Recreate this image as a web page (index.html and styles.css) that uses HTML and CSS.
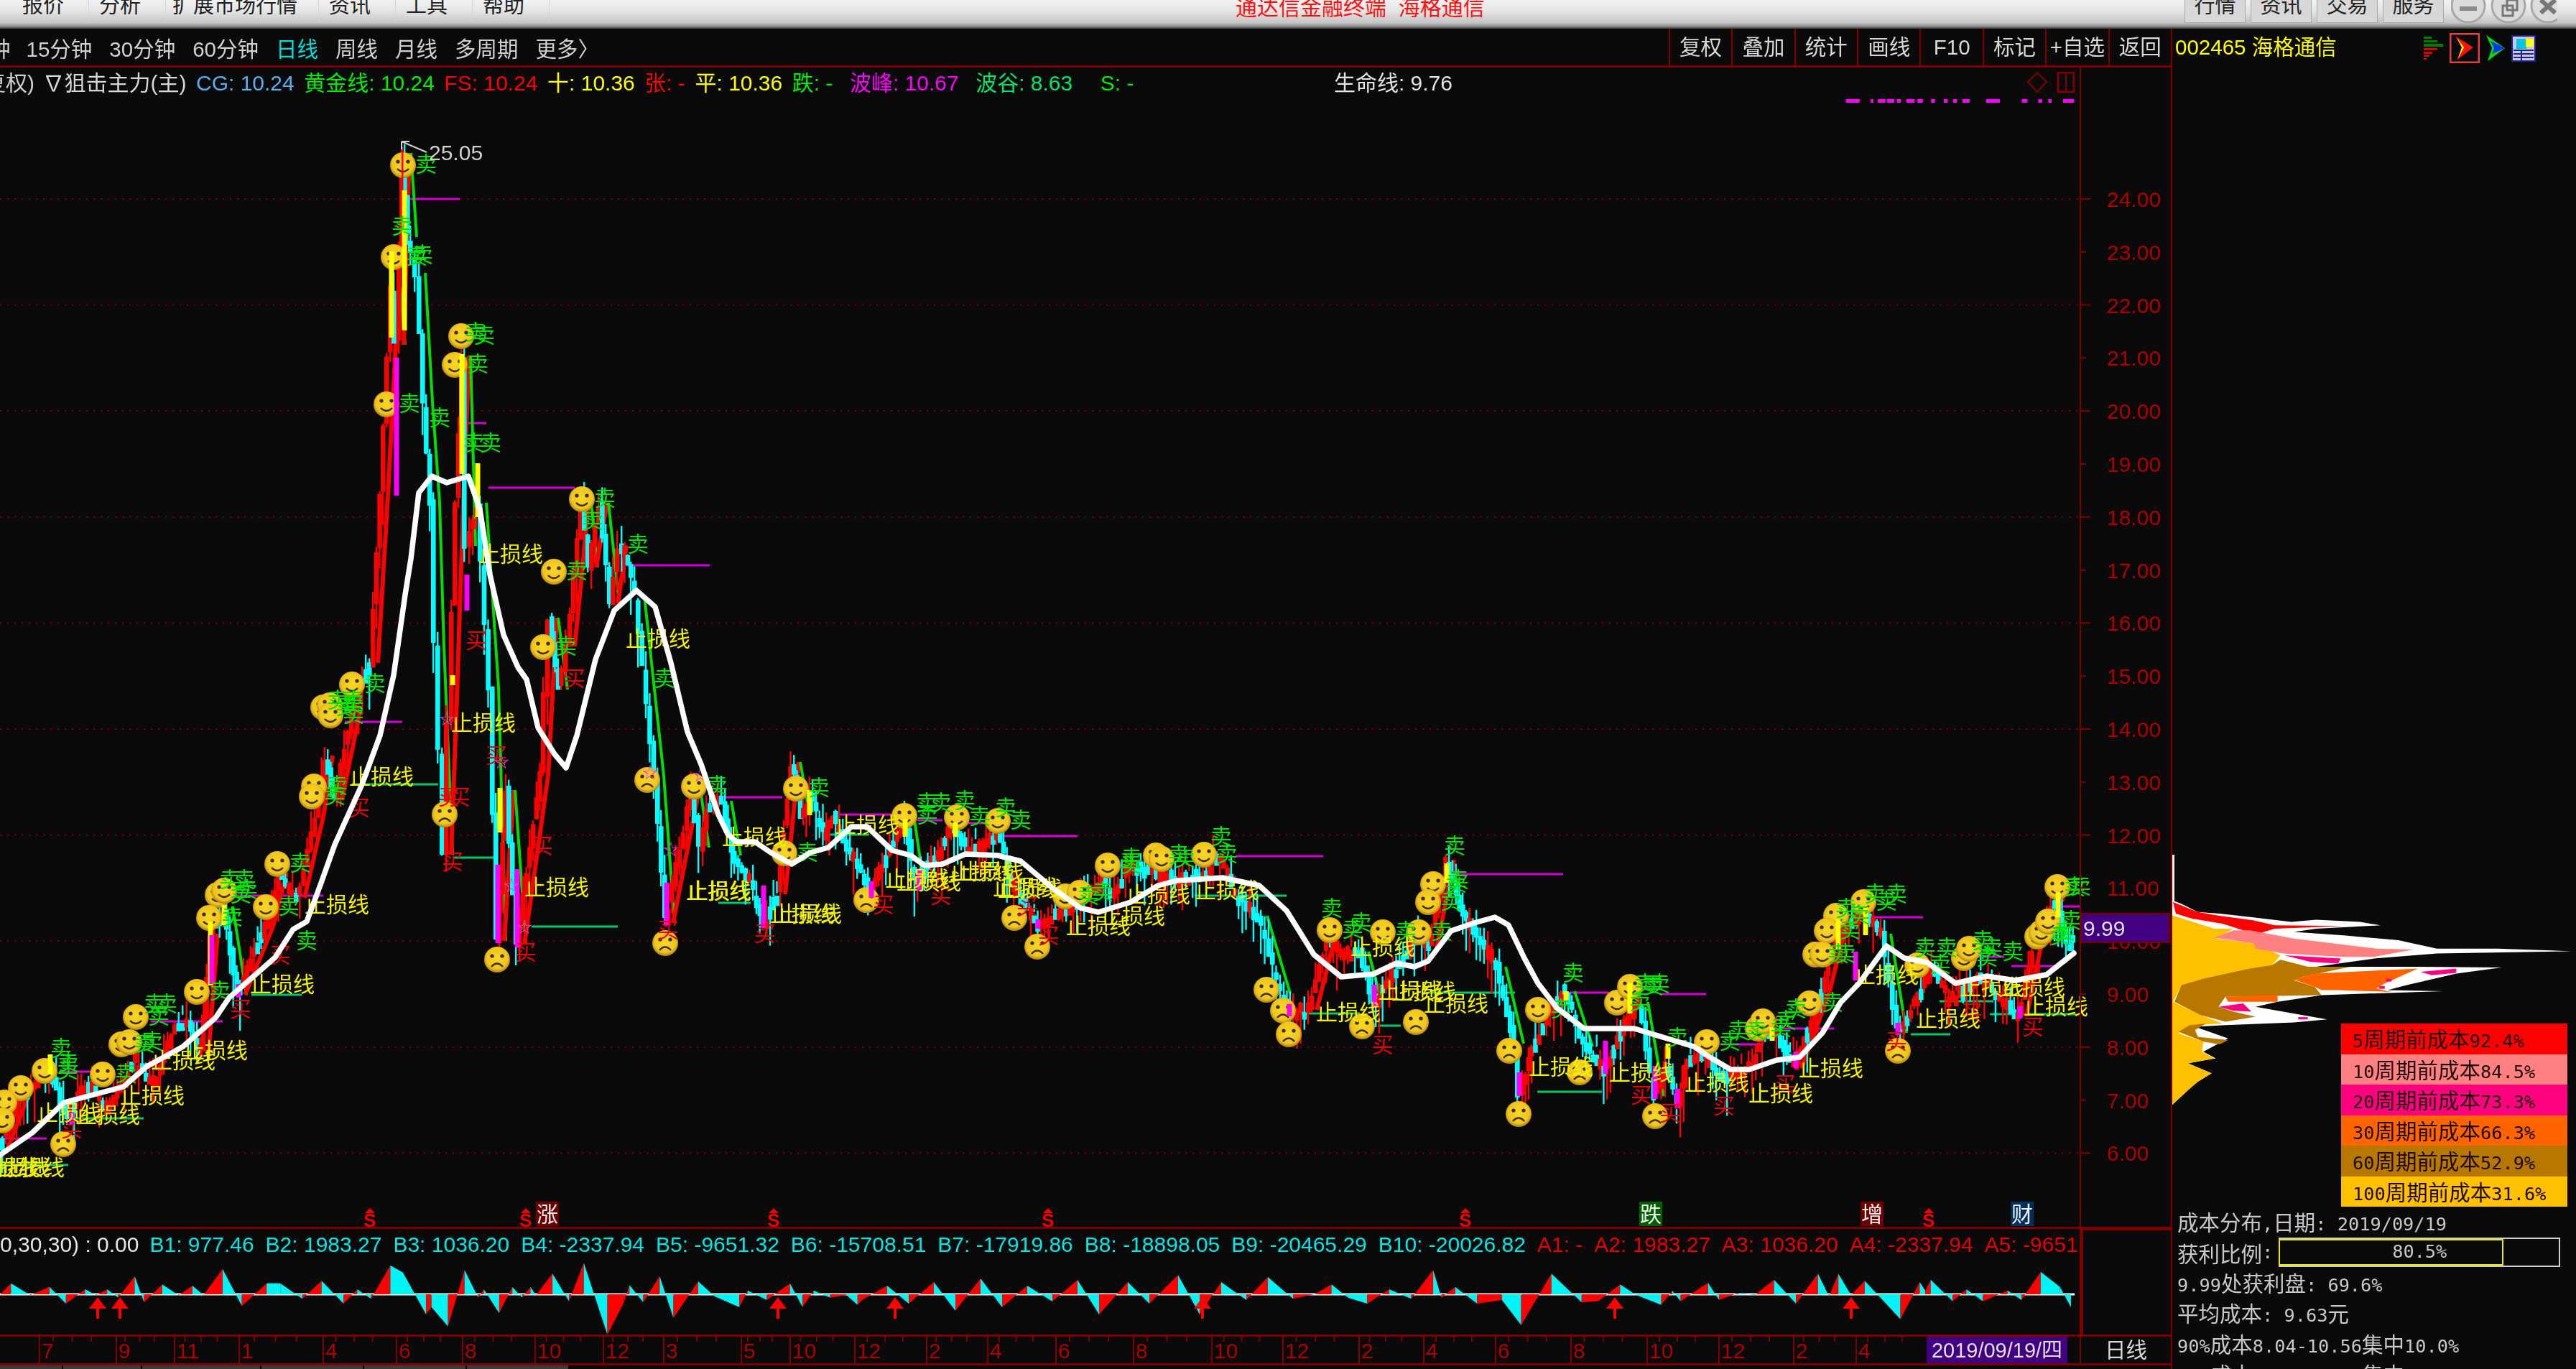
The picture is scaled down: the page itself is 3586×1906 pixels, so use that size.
FILE: index.html
```html
<!DOCTYPE html>
<html lang="zh-CN">
<head>
<meta charset="utf-8">
<title>海格通信 K线</title>
<link rel="stylesheet" href="styles.css">
</head>
<body>
<div class="app">
  <header class="titlebar">
    <nav class="menu">
      <span class="menu-item">报价</span><span class="menu-item">分析</span><span class="menu-item wide">扩展市场行情</span><span class="menu-item">资讯</span><span class="menu-item">工具</span><span class="menu-item">帮助</span>
    </nav>
    <div class="caption">通达信金融终端  海格通信</div>
    <div class="sysbtns">
      <span class="sysbtn">行情</span><span class="sysbtn">资讯</span><span class="sysbtn">交易</span><span class="sysbtn">服务</span>
      <svg class="winctl" width="148" height="40" viewBox="0 0 148 40">
        <g fill="#dcdcdc" stroke="#a8a8a8" stroke-width="3"><circle cx="24" cy="8" r="23"/><circle cx="80" cy="8" r="23"/><circle cx="135" cy="8" r="23"/></g>
        <rect x="12" y="9" width="24" height="6" fill="#8a8a8a"/>
        <g fill="none" stroke="#777" stroke-width="3"><rect x="72" y="8" width="14" height="14"/><rect x="78" y="0" width="14" height="14"/></g>
        <path d="M125 0L145 18M145 0L125 18" stroke="#777" stroke-width="6" fill="none"/>
      </svg>
    </div>
  </header>
  <div class="workspace">
    <section class="left">
      <div class="tabs">
        <span class="tab first">钟</span><span class="tab">15分钟</span><span class="tab">30分钟</span><span class="tab">60分钟</span><span class="tab active">日线</span><span class="tab">周线</span><span class="tab">月线</span><span class="tab">多周期</span><span class="tab">更多〉</span>
        <div class="tools"><span class="tool">复权</span><span class="tool">叠加</span><span class="tool">统计</span><span class="tool">画线</span><span class="tool">F10</span><span class="tool">标记</span><span class="tool">+自选</span><span class="tool">返回</span></div>
      </div>
      <div class="pricehead">
        <span class="hd first-hd">复权)</span>
        <span class="hd name">∇狙击主力(主)</span>
        <span class="hd c-cg">CG: 10.24</span>
        <span class="hd c-gold">黄金线: 10.24</span>
        <span class="hd c-red">FS: 10.24</span>
        <span class="hd c-yellow">十: 10.36</span>
        <span class="hd c-red">张: -</span>
        <span class="hd c-yellow gap-m">平: 10.36</span>
        <span class="hd c-gold">跌: -</span>
        <span class="hd c-magenta gap-s">波峰: 10.67</span>
        <span class="hd c-teal gap-s">波谷: 8.63</span>
        <span class="hd c-gold gap-l">S: -</span>
        <span class="hd c-white gap-xl">生命线: 9.76</span>
        <svg class="marks" width="66" height="32" viewBox="0 0 66 32"><path d="M14 1L27 14L14 28L1 14Z" fill="none" stroke="#800000" stroke-width="2"/><rect x="43" y="1" width="22" height="27" fill="none" stroke="#800000" stroke-width="3"/><path d="M54 1V28" stroke="#800000" stroke-width="2"/></svg>
      </div>
      <svg id="price" class="price" viewBox="0 137 3022 1571" width="3022" height="1571"></svg>
      <div class="subrow">
        <div class="subpane">
          <div class="subhead">
            <span class="hd c-white first-sub">0,30,30) : 0.00</span>
            <span class="hd c-cyan">B1: 977.46</span><span class="hd c-cyan">B2: 1983.27</span><span class="hd c-cyan">B3: 1036.20</span><span class="hd c-cyan">B4: -2337.94</span><span class="hd c-cyan">B5: -9651.32</span><span class="hd c-cyan">B6: -15708.51</span><span class="hd c-cyan">B7: -17919.86</span><span class="hd c-cyan">B8: -18898.05</span><span class="hd c-cyan">B9: -20465.29</span><span class="hd c-cyan">B10: -20026.82</span>
            <span class="hd c-dimred">A1: -</span><span class="hd c-dimred">A2: 1983.27</span><span class="hd c-dimred">A3: 1036.20</span><span class="hd c-dimred">A4: -2337.94</span><span class="hd c-dimred">A5: -9651.32</span>
          </div>
          <svg id="sub" class="sub" viewBox="0 1754 2895 104" width="2895" height="104"></svg>
        </div>
        <div class="subgutter"></div>
      </div>
      <div class="timerow">
        <svg id="axis" class="axis" viewBox="0 1861 2895 37" width="2895" height="37"></svg>
        <div class="cycle">日线</div>
      </div>
      <div class="statusbar"><span></span><span></span><span></span><span></span><span></span><span></span></div>
    </section>
    <aside class="side">
      <div class="side-head">
        <span class="code">002465 海格通信</span>
        <div class="side-icons">
          <svg width="28" height="34" viewBox="0 0 28 34"><g fill="#008000"><rect width="11" height="3" y="1"/><rect width="19" height="3" y="6"/><rect width="27" height="4" y="11"/></g><g fill="#e00000"><rect width="19" height="3" y="17"/><rect width="12" height="3" y="22"/><rect width="8" height="2" y="27"/><rect width="4" height="2" y="31"/></g></svg>
          <svg class="ic-sel" width="42" height="42" viewBox="0 0 42 42"><rect x="1" y="1" width="40" height="40" fill="#0a0a0a" stroke="#e04040" stroke-width="3"/><path d="M9 5L33 20L11 37L17 20Z" fill="#ff1000"/><path d="M9 5L20 20L11 37L17 20Z" fill="#ffff00"/></svg>
          <svg width="28" height="36" viewBox="0 0 28 36"><path d="M1 0L27 18L3 36L9 18Z" fill="#00e000"/><path d="M7 8L27 18L9 26L12 18Z" fill="#0030ff"/></svg>
          <svg width="34" height="37" viewBox="0 0 34 37"><rect x="1" y="1" width="32" height="35" fill="#c8c8e0" stroke="#202090" stroke-width="2"/><rect x="7" y="5" width="14" height="14" fill="#00c8e0"/><rect x="20" y="5" width="11" height="11" fill="#ffff00"/><path d="M3 21H31M3 26H31M3 31H31M14 21V36" stroke="#202090" stroke-width="2"/></svg>
        </div>
      </div>
      <div class="chips">
        <svg id="chips" class="chips-art" viewBox="0 0 560 360" width="560" height="360"></svg>
        <ul class="legend">
          <li class="l1"><span class="m">5</span>周期前成本<span class="m">92.4%</span></li>
          <li class="l2"><span class="m">10</span>周期前成本<span class="m">84.5%</span></li>
          <li class="l3"><span class="m">20</span>周期前成本<span class="m">73.3%</span></li>
          <li class="l4"><span class="m">30</span>周期前成本<span class="m">66.3%</span></li>
          <li class="l5"><span class="m">60</span>周期前成本<span class="m">52.9%</span></li>
          <li class="l6"><span class="m">100</span>周期前成本<span class="m">31.6%</span></li>
        </ul>
      </div>
      <div class="stats">
        <div class="stat">成本分布<span class="m">,</span>日期<span class="m">: 2019/09/19</span></div>
        <div class="stat profit">获利比例<span class="m">:</span>
          <div class="pbar"><div class="pfill" style="width:80.5%"></div><span class="m ptext">80.5%</span></div>
        </div>
        <div class="stat"><span class="m">9.99</span>处获利盘<span class="m">: 69.6%</span></div>
        <div class="stat">平均成本<span class="m">: 9.63</span>元</div>
        <div class="stat"><span class="m">90%</span>成本<span class="m">8.04-10.56</span>集中<span class="m">10.0%</span></div>
        <div class="stat"><span class="m">70%</span>成本<span class="m">8.76-10.30</span>集中<span class="m">6.1%</span></div>
      </div>
    </aside>
  </div>
</div>
<script src="chart.js"></script>
</body>
</html>
```
FILE: styles.css
```css
* { box-sizing: border-box; }
html, body { margin: 0; padding: 0; background: #0a0a0a; }
body { width: 3586px; height: 1906px; overflow: hidden; font-family: "Liberation Sans", "Noto Sans CJK SC", sans-serif; font-size: 30px; color: #cfcfcf; }
.app { width: 3586px; height: 1906px; overflow: hidden; filter: blur(0.55px); }

.titlebar { height: 40px; display: grid; grid-template-columns: 1720px 1fr auto; overflow: hidden; background: linear-gradient(#f2f2f2 0, #e4e4e4 40%, #c4c4c4 80%, #8a8a8a 92%, #3a3a3a 100%); }
.menu { display: flex; padding-left: 17px; }
.menu-item { width: 107px; text-align: left; padding-left: 14px; line-height: 16px; height: 32px; color: #222; font-size: 29px; border-right: 1px solid #d4d4d4; }
.menu-item.wide { width: 213px; padding-left: 9px; }
.caption { color: #ff1010; font-size: 30px; line-height: 21px; white-space: pre; }
.sysbtns { display: flex; gap: 7px; align-items: flex-start; padding-right: 26px; }
.sysbtn { width: 85px; height: 32px; line-height: 16px; text-align: center; font-size: 29px; color: #222; background: #d8d8d8; border: 1px solid #a8a8a8; border-top: 0; }
.winctl { margin-left: 3px; display: block; }

.workspace { display: flex; height: 1866px; }
.left { width: 3024px; border-right: 2px solid #800000; display: flex; flex-direction: column; }
.tabs { height: 54px; display: flex; align-items: center; border-bottom: 3px solid #800000; overflow: hidden; font-size: 29.5px; padding-left: 0; gap: 24px; }
.tab { color: #d0d0d0; white-space: nowrap; }
.tab.first { margin-left: -15px; margin-right: -2px; }
.tab.active { color: #00dede; }
.tools { margin-left: auto; display: flex; align-self: stretch; }
.tool { width: 87.4px; border-left: 2px solid #800000; text-align: center; line-height: 51px; color: #d8d8d8; white-space: nowrap; }

.pricehead { width: 2897px; height: 43px; display: flex; align-items: center; gap: 13.5px; border-right: 2px solid #800000; overflow: hidden; white-space: nowrap; }
.hd { flex: none; line-height: 43px; }
.first-hd { margin-left: -22px; margin-right: -2px; }
.name { color: #d8d8d8; }
.c-cg { color: #55b0f0; }
.c-gold { color: #00f000; }
.c-red { color: #ff0000; }
.c-dimred { color: #e80000; }
.c-yellow { color: #ffff00; }
.c-magenta { color: #ff00ff; }
.c-teal { color: #00e868; }
.c-white { color: #e4e4e4; }
.c-cyan { color: #00e8e8; }
.gap-s { margin-left: 10px; }
.gap-m { margin-left: 0; }
.gap-l { margin-left: 25px; }
.gap-xl { margin-left: 265px; }
.marks { margin-left: auto; margin-right: 7px; flex: none; }

.price { display: block; flex: none; }
.grid-line { stroke: #800000; stroke-width: 2; stroke-dasharray: 2.5 7.5; }
.axis-line { stroke: #800000; stroke-width: 2; }
.ylabel { fill: #b00000; font-size: 30px; }
.cur-box { fill: #400080; stroke: #800000; stroke-width: 2; }
.cur-text { fill: #e0e0e0; font-size: 30px; }
.peak { fill: #cfcfcf; font-size: 30px; }
.sell { fill: #00e800; font-size: 30px; font-family: "Noto Sans CJK SC", sans-serif; }
.buy { fill: #f00000; font-size: 30px; font-family: "Noto Sans CJK SC", sans-serif; }
.stop { fill: #f4f400; font-size: 30px; font-family: "Noto Sans CJK SC", sans-serif; }
.star { fill: #e040e0; font-size: 22px; }
.sig { font-size: 30px; font-family: "Noto Sans CJK SC", sans-serif; fill: #f0f0f0; }
.s-mark { fill: #f00000; font-size: 26px; font-weight: bold; }

.subrow { display: flex; height: 150px; flex: none; border-top: 3px solid #800000; }
.subpane { width: 2895px; overflow: hidden; }
.subhead { height: 43px; display: flex; align-items: center; gap: 16px; overflow: hidden; white-space: nowrap; }
.first-sub { margin-right: -1px; }
.sub { display: block; }
.subgutter { flex: 1; border-left: 5px solid #800000; border-top: 2px solid #800000; }

.timerow { height: 43px; flex: none; display: flex; border-top: 3px solid #800000; border-bottom: 3px solid #800000; }
.axis { display: block; flex: none; }
.tick { stroke: #800000; stroke-width: 2; }
.tlabel { fill: #b00000; font-size: 30px; }
.datetext { fill: #e0e0e0; font-size: 29px; font-family: "Liberation Sans", "Noto Sans CJK SC", sans-serif; }
.cycle { flex: 1; border-left: 2px solid #800000; text-align: center; line-height: 37px; color: #d8d8d8; font-size: 29.5px; }

.statusbar { height: 5px; flex: none; display: flex; }
.statusbar span { height: 5px; background: #3c3c3c; border-right: 2px solid #0a0a0a; width: 110px; }
.statusbar span:nth-child(1) { width: 88px; }
.statusbar span:nth-child(3) { width: 166px; }
.statusbar span:nth-child(4), .statusbar span:nth-child(5), .statusbar span:nth-child(6) { width: 143px; }

.side { flex: 1; display: flex; flex-direction: column; min-width: 0; overflow: hidden; }
.side-head { height: 54px; flex: none; display: flex; align-items: center; padding-left: 4px; }
.code { color: #ffff00; font-size: 29.5px; white-space: nowrap; position: relative; top: -4px; }
.side-icons { margin-left: auto; margin-right: 56px; display: flex; align-items: center; gap: 8px; }

.chips { position: relative; flex: none; height: 1586px; display: flex; flex-direction: column; justify-content: flex-end; align-items: flex-end; padding-right: 12px; }
.chips-art { position: absolute; left: 0; top: 1096px; }
.legend { position: relative; list-style: none; margin: 0; padding: 0; width: 315px; }
.legend li { height: 42.5px; line-height: 40px; padding-left: 16px; font-size: 29.5px; color: #1a0808; white-space: nowrap; font-family: "Noto Sans CJK SC", sans-serif; }
.l1 { background: #ff0000; }
.l2 { background: #ff8080; }
.l3 { background: #ff0080; }
.l4 { background: #ff6400; }
.l5 { background: #b87800; }
.l6 { background: #ffc000; }
.m { font-family: "DejaVu Sans Mono", monospace; font-size: 25.3px; }

.stats { padding-left: 7px; flex: none; }
.stat { height: 42.4px; line-height: 40px; font-size: 29.5px; color: #c8c8c8; white-space: nowrap; font-family: "Noto Sans CJK SC", sans-serif; }
.profit { display: flex; align-items: center; }
.pbar { position: relative; margin-left: 8px; width: 392px; height: 41px; border: 2px solid #d0d0d0; }
.pfill { height: 37px; border: 2px solid #e8e800; margin: 0 0 0 -2px; }
.ptext { position: absolute; left: 0; right: 0; top: -2px; text-align: center; line-height: 40px; color: #c8c8c8; }
```
FILE: chart.js
```js
(function () {
  var seed = 20190919;
  function rnd() { seed = (seed * 1664525 + 1013904223) >>> 0; return seed / 4294967296; }
  function Y(p) { return 277 + (24 - p) * 73.8; }

  var pivots = [[0,1600],[30,1525],[70,1490],[90,1550],[125,1510],[150,1545],[175,1500],[185,1475],[215,1510],[240,1440],[262,1425],[280,1470],[293,1300],[312,1262],[331,1385],[370,1290],[389,1215],[414,1250],[440,1137],[453,1052],[466,1114],[491,991],[516,923],[530,690],[545,400],[552,480],[560,213],[568,330],[580,380],[590,560],[600,700],[606,900],[618,1190],[625,1000],[635,700],[643,495],[650,760],[665,700],[682,957],[692,1310],[705,1100],[720,1315],[753,1080],[765,860],[778,960],[790,900],[800,800],[810,690],[820,790],[835,700],[850,840],[862,760],[875,785],[885,830],[912,1080],[927,1285],[963,1100],[975,1180],[985,1120],[1006,1115],[1019,1191],[1045,1230],[1064,1290],[1083,1245],[1102,1061],[1115,1134],[1128,1103],[1147,1161],[1160,1134],[1185,1191],[1210,1237],[1230,1203],[1261,1142],[1274,1230],[1312,1180],[1325,1145],[1350,1190],[1389,1161],[1408,1230],[1446,1291],[1491,1264],[1536,1226],[1548,1245],[1574,1207],[1606,1214],[1638,1226],[1676,1218],[1695,1191],[1721,1249],[1752,1275],[1784,1383],[1797,1410],[1823,1406],[1848,1306],[1868,1330],[1893,1325],[1912,1398],[1945,1350],[1976,1298],[1990,1320],[2014,1197],[2033,1262],[2052,1296],[2084,1346],[2109,1453],[2116,1522],[2129,1472],[2160,1403],[2180,1380],[2205,1457],[2234,1491],[2262,1426],[2282,1395],[2304,1526],[2320,1480],[2336,1541],[2345,1484],[2371,1468],[2396,1499],[2441,1487],[2454,1434],[2475,1440],[2498,1487],[2537,1380],[2556,1304],[2594,1273],[2620,1300],[2642,1438],[2671,1388],[2690,1346],[2715,1395],[2754,1361],[2811,1415],[2830,1323],[2862,1250],[2878,1319],[2887,1304]];

  var life = [[0,1608],[45,1577],[89,1535],[172,1513],[204,1485],[255,1457],[300,1417],[319,1389],[383,1333],[408,1294],[427,1283],[446,1232],[466,1176],[504,1092],[529,1024],[548,940],[564,828],[572,778],[583,686],[601,663],[622,672],[652,663],[668,709],[682,800],[701,884],[721,929],[733,946],[749,1013],[772,1050],[788,1069],[803,1024],[829,918],[855,850],[886,822],[912,845],[934,923],[957,1019],[976,1064],[1000,1134],[1013,1161],[1025,1172],[1051,1172],[1073,1187],[1102,1203],[1128,1187],[1153,1180],[1185,1151],[1207,1151],[1242,1184],[1268,1191],[1287,1205],[1312,1203],[1344,1189],[1389,1191],[1421,1199],[1466,1237],[1504,1264],[1529,1270],[1574,1256],[1612,1233],[1638,1226],[1702,1222],[1753,1233],[1791,1268],[1829,1329],[1867,1360],[1912,1356],[1944,1341],[1969,1346],[1988,1338],[2020,1296],[2052,1285],[2081,1277],[2100,1288],[2122,1334],[2141,1369],[2167,1403],[2205,1432],[2275,1432],[2358,1457],[2377,1470],[2409,1489],[2435,1489],[2473,1476],[2505,1472],[2537,1438],[2562,1396],[2588,1369],[2626,1317],[2651,1334],[2683,1340],[2722,1369],[2766,1359],[2805,1365],[2849,1357],[2887,1327]];

  var smiles = [[490,953],[450,985],[459,982],[460,996],[437,1095],[434,1109],[386,1203],[370,1263],[303,1246],[312,1240],[291,1278],[274,1381],[189,1416],[169,1454],[180,1451],[143,1496],[62,1491],[29,1515],[6,1535],[3,1560],[756,901],[966,1095],[561,230],[548,358],[538,563],[642,468],[633,508],[810,695],[771,796],[1108,1098],[1092,1188],[1259,1136],[1332,1138],[1389,1143],[1483,1248],[1503,1243],[1542,1205],[1609,1191],[1617,1196],[1676,1190],[1851,1295],[1925,1298],[1975,1298],[1995,1231],[1988,1256],[2141,1406],[2251,1396],[2269,1374],[2376,1451],[2447,1432],[2454,1422],[2519,1397],[2556,1275],[2543,1296],[2527,1329],[2537,1329],[2594,1256],[2669,1344],[2734,1334],[2741,1321],[2836,1304],[2842,1298],[2851,1283],[2864,1235]];
  var sads = [[88,1593],[619,1134],[692,1336],[901,1086],[926,1313],[1206,1253],[1412,1278],[1444,1318],[1763,1378],[1786,1407],[1794,1440],[1896,1429],[1971,1423],[2101,1463],[2114,1551],[2199,1493],[2304,1554],[2642,1463]];
  var sellsExtra = [[560,315],[588,355],[612,582],[683,617],[660,617],[662,463],[320,1225],[340,1225],[215,1398],[232,1398],[85,1460],[95,1480],[492,975],[470,975],[427,1310],[825,725],[888,758],[925,945],[1290,1118],[1310,1118],[1343,1115],[1400,1125],[1575,1195],[1700,1165],[1854,1265],[1895,1285],[2025,1178],[2030,1225],[2190,1355],[2290,1370],[2310,1370],[2335,1445],[2420,1435],[2445,1435],[2500,1405],[2610,1245],[2640,1245],[2570,1265],[2680,1320],[2710,1320],[2760,1310],[2802,1325],[2888,1235]];
  var buysExtra = [[100,1572],[335,1405],[390,1330],[500,1125],[640,1110],[625,1110],[630,1200],[663,892],[691,1052],[732,1326],[755,1178],[800,945],[930,1295],[1065,1300],[1230,1260],[1310,1247],[1430,1262],[1460,1303],[1925,1455],[2285,1525],[2325,1550],[2400,1540],[2485,1510],[2640,1450],[2745,1410],[2830,1430]];
  var stops = [[531,1081],[673,1006],[469,1259],[393,1370],[775,1235],[711,771],[916,889],[1001,1240],[300,1462],[255,1476],[212,1525],[150,1552],[96,1549],[45,1625],[25,1625],[10,1625],[1050,1165],[1000,1240],[1117,1272],[1127,1272],[1207,1148],[1277,1223],[1293,1227],[1367,1213],[1380,1213],[1427,1235],[1434,1237],[1529,1289],[1577,1275],[1612,1245],[1708,1239],[1877,1409],[1925,1318],[1963,1379],[1982,1380],[2027,1397],[2173,1485],[2285,1493],[2390,1507],[2479,1522],[2549,1487],[2626,1357],[2712,1418],[2773,1374],[2830,1374],[2862,1401]];
  var maglines = [[565,640,277],[647,677,589],[680,800,679],[869,988,787],[1000,1089,1110],[1167,1240,1134],[1277,1312,1142],[1330,1372,1146],[1395,1500,1164],[480,560,1005],[330,450,1247],[210,310,1422],[82,160,1492],[0,65,1585],[1720,1842,1192],[2020,2176,1217],[2185,2240,1382],[2310,2375,1384],[2395,2455,1454],[2470,2553,1432],[2600,2677,1277],[2720,2790,1332],[2800,2860,1345],[2860,2895,1262]];
  var greenlines = [[490,610,1092],[630,690,1194],[740,860,1290],[350,420,1385],[100,200,1557],[0,95,1622],[1000,1045,1257],[1155,1210,1162],[1663,1791,1247],[1918,1950,1428],[1810,1893,1411],[1988,2109,1382],[2140,2230,1520],[2700,2775,1394],[2660,2715,1440],[2770,2890,1412]];
  var ybars = [[563,265,460],[545,350,470],[643,493,660],[665,645,720],[293,1283,1372],[312,1260,1288],[70,1468,1496],[630,940,954],[696,1097,1159],[1127,1100,1135],[1260,1140,1165],[1330,1145,1165],[2014,1202,1229],[2180,1380,1395],[2269,1369,1411],[2322,1453,1474],[2467,1430,1449],[2559,1280,1323],[2597,1263,1302],[2865,1242,1277]];
  var mbars = [[552,498,690],[693,1204,1313],[720,1210,1319],[295,1302,1370],[332,1370,1389],[100,1549,1566],[928,1229,1288],[650,800,850],[1063,1233,1292],[1213,1227,1250],[1280,1210,1240],[1445,1280,1293],[1795,1398,1415],[1913,1371,1402],[2115,1493,1526],[2235,1449,1495],[2304,1484,1530],[2335,1516,1543],[2500,1464,1487],[2583,1325,1365],[2642,1424,1441],[2812,1401,1418]];
  var stars = [[622,1000],[698,1060],[712,1232],[730,1290],[905,1075],[934,1182],[975,1078]];

  function rect(x, y, w, h, c) { return '<rect x="' + x.toFixed(1) + '" y="' + y.toFixed(1) + '" width="' + w + '" height="' + Math.max(h, 2).toFixed(1) + '" fill="' + c + '"/>'; }
  function text(cls, x, y, s, anchor) { return '<text class="' + cls + '" x="' + x + '" y="' + y + '"' + (anchor ? ' text-anchor="' + anchor + '"' : '') + '>' + s + '</text>'; }
  function poly(pts) { return pts.map(function (p) { return p[0] + ',' + p[1]; }).join(' '); }

  /* ---------- main price panel ---------- */
  var out = '';
  out += '<defs><radialGradient id="gold" cx="50%" cy="45%" r="55%"><stop offset="0" stop-color="#f8d828"/><stop offset=".75" stop-color="#f0c41c"/><stop offset="1" stop-color="#a88018"/></radialGradient>' +
    '<g id="smile"><circle r="18" fill="url(#gold)"/><circle cx="-7" cy="-5" r="2.6" fill="#3a2a08"/><circle cx="7" cy="-5" r="2.6" fill="#3a2a08"/><path d="M-8 5Q0 13 8 5" fill="none" stroke="#3a2a08" stroke-width="2.4"/></g>' +
    '<g id="sad"><circle r="18" fill="url(#gold)"/><circle cx="-7" cy="-5" r="2.6" fill="#3a2a08"/><circle cx="7" cy="-5" r="2.6" fill="#3a2a08"/><path d="M-8 10Q0 1 8 10" fill="none" stroke="#3a2a08" stroke-width="2.4"/></g></defs>';

  for (var p = 24, gy; p >= 6; p -= 2) {
    gy = Y(p);
    out += '<line class="grid-line" x1="0" x2="2893" y1="' + gy + '" y2="' + gy + '"/>';
  }
  maglines.forEach(function (l) { out += rect(l[0], l[2] - 1.5, l[1] - l[0], 3, '#d800d8'); });
  greenlines.forEach(function (l) { out += rect(l[0], l[2] - 1.5, l[1] - l[0], 3, '#00c868'); });

  // drift lines along large moves
  var drift = '';
  for (var i = 0; i < pivots.length - 1; i++) {
    var a = pivots[i], b = pivots[i + 1], d = b[1] - a[1];
    if (d > 70) drift += '<line x1="' + (a[0] + 12) + '" y1="' + a[1] + '" x2="' + (b[0] + 12) + '" y2="' + b[1] + '" stroke="#00e000" stroke-width="4"/>';
    else if (d < -70) drift += '<line x1="' + (a[0] + 10) + '" y1="' + a[1] + '" x2="' + (b[0] + 10) + '" y2="' + b[1] + '" stroke="#ff0000" stroke-width="6"/>';
  }
  out += drift;

  // candlesticks walked along the pivots
  var STEP = 5;
  for (i = 0; i < pivots.length - 1; i++) {
    a = pivots[i]; b = pivots[i + 1];
    var n = Math.max(1, Math.round((b[0] - a[0]) / STEP));
    var rising = b[1] < a[1];
    for (var k = 0; k < n; k++) {
      var t0 = k / n, t1 = (k + 1) / n;
      var y0 = a[1] + (b[1] - a[1]) * t0, y1 = a[1] + (b[1] - a[1]) * t1;
      var x = a[0] + (b[0] - a[0]) * t0;
      y0 += (rnd() - .5) * 14; y1 += (rnd() - .5) * 14;
      var up = rising;
      if (Math.abs(b[1] - a[1]) / n < 14 && rnd() < .3) up = !up;
      var col = up ? '#ff0000' : '#00ffff';
      var top = Math.min(y0, y1), bot = Math.max(y0, y1);
      if (bot - top < 10) { top -= 5; bot += 5; }
      out += rect(x + 2, top - rnd() * 28, 2.4, bot - top + rnd() * 56, col);
      out += rect(x, top, 6.6, bot - top, col);
    }
  }
  smiles.forEach(function (s) { out += '<use href="#smile" x="' + s[0] + '" y="' + s[1] + '"/>'; });
  sads.forEach(function (s) { out += '<use href="#sad" x="' + s[0] + '" y="' + s[1] + '"/>'; });
  ybars.forEach(function (b) { out += rect(b[0] - 3.5, b[1], 7, b[2] - b[1], '#ffff00'); });
  mbars.forEach(function (b) { out += rect(b[0] - 3.5, b[1], 7, b[2] - b[1], '#ff00ff'); });

  smiles.forEach(function (s) { if (s[0] > 60) out += text('sell', s[0] + 32, s[1] + 9, '卖', 'middle'); });
  sellsExtra.forEach(function (s) { out += text('sell', s[0], s[1] + 10, '卖', 'middle'); });
  buysExtra.forEach(function (s) { out += text('buy', s[0], s[1] + 10, '买', 'middle'); });
  stars.forEach(function (s) { out += text('star', s[0], s[1] + 8, '☆', 'middle'); });
  stops.forEach(function (s) { out += text('stop', s[0], s[1] + 11, '止损线', 'middle'); });

  out += '<polyline points="' + poly(life) + '" fill="none" stroke="#ffffff" stroke-width="7.5" stroke-linejoin="round" stroke-linecap="round"/>';

  // peak marker
  out += rect(559, 205, 2.5, 60, '#ff0000');
  out += '<path d="M559 197L594 212M559 197V208M559 197H570" stroke="#cfcfcf" stroke-width="2" fill="none"/>';
  out += text('peak', 597, 223, '25.05');

  // limit strip
  [[240,265],[285,290],[298,312],[315,328],[333,340],[350,365],[370,380],[395,402],[418,425],[435,442],[452,465],[495,520],[560,570],[590,597],[608,614],[635,655]].forEach(function (r) {
    out += rect(2386 + r[0] / 1.3067, 138, (r[1] - r[0]) / 1.3067, 5, '#ff00ff');
  });

  // price axis
  out += '<line class="axis-line" x1="2896" x2="2896" y1="137" y2="1708"/>';
  for (p = 24; p >= 6; p--) {
    gy = Y(p);
    out += '<line class="axis-line" x1="2896" x2="' + (p % 2 ? 2904 : 2910) + '" y1="' + gy + '" y2="' + gy + '"/>';
    out += text('ylabel', 2933, gy + 11, p.toFixed(2));
  }
  out += '<rect class="cur-box" x="2897" y="1272" width="123" height="40"/>';
  out += text('cur-text', 2900, 1303, '9.99');

  // event tags above the sub panel
  [515, 732, 1077, 1459, 2040, 2685].forEach(function (sx) {
    out += '<path d="M' + sx + ' 1682L' + (sx + 7) + ' 1689H' + (sx - 7) + 'Z" fill="#f00000"/>';
    out += text('s-mark', sx, 1708, 'S', 'middle');
  });
  [[746, '涨', '#700000'], [2282, '跌', '#006000'], [2590, '增', '#700000'], [2799, '财', '#003060']].forEach(function (g) {
    out += rect(g[0], 1673, 32, 34, g[2]);
    out += text('sig', g[0] + 16, 1701, g[1], 'middle');
  });
  document.getElementById('price').innerHTML = out;

  /* ---------- oscillator ---------- */
  var z5 = [[0,487],[20,440],[55,490],[90,455],[120,525],[155,465],[175,490],[195,465],[215,500],[245,410],[262,520],[295,445],[325,490],[350,450],[370,490],[405,380],[440,535],[485,440],[510,440],[550,505],[585,430],[625,525],[650,465],[675,505],[710,365],[733,395],[775,570],[785,540],[815,620],[845,385],[870,500],[880,465],[908,565],[932,455],[950,500],[965,455],[975,490],[1005,400],[1035,515],[1062,355],[1105,655],[1135,520],[1145,447],[1170,520],[1200,410],[1225,585],[1270,432],[1300,495],[1345,540],[1360,470],[1395,510],[1437,440],[1460,540],[1480,470],[1510,500],[1540,490],[1560,530]];
  var mid = [[1200,1810],[1235,1790],[1265,1815],[1300,1785],[1330,1825],[1365,1780],[1395,1820],[1430,1790],[1465,1812],[1500,1782],[1530,1830],[1570,1785],[1600,1815],[1640,1775],[1670,1830],[1700,1785],[1735,1810],[1765,1778]];
  var z6 = [[0,505],[40,485],[70,445],[100,500],[135,525],[175,465],[215,505],[255,385],[270,500],[295,455],[335,525],[380,510],[415,615],[470,400],[525,520],[555,515],[595,445],[625,490],[670,530],[690,470],[705,515],[755,438],[775,510],[810,480],[840,490],[875,425],[915,525],[955,400],[975,495],[992,400],[1015,490],[1040,430],[1105,590],[1140,435],[1150,470],[1160,425],[1200,515],[1225,465],[1255,515],[1300,470],[1325,510],[1360,392],[1395,455],[1415,540]];
  var osc = z5.map(function (q) { return [q[0] / 1.3067, 1640 + q[1] / 3]; }).concat(mid).concat(z6.map(function (q) { return [1800 + q[0] / 1.3067, 1640 + q[1] / 3]; }));
  var ZERO = 1802, so = '<rect x="0" y="1800.5" width="2888" height="3" fill="#ffffff"/>';
  for (i = 0; i < osc.length - 1; i++) {
    a = osc[i]; b = osc[i + 1];
    so += '<polygon points="' + poly([[a[0].toFixed(1), a[1].toFixed(1)], [b[0].toFixed(1), b[1].toFixed(1)], [b[0].toFixed(1), ZERO], [a[0].toFixed(1), ZERO]]) + '" fill="' + (b[1] < a[1] ? '#ff0000' : '#00f4f4') + '"/>';
  }
  [136, 167, 1083, 1246, 1674, 2248, 2577].forEach(function (ax) {
    so += '<path d="M' + ax + ' 1806L' + (ax + 12) + ' 1822H' + (ax + 2) + 'V1836H' + (ax - 2) + 'V1822H' + (ax - 12) + 'Z" fill="#ff0000"/>';
  });
  document.getElementById('sub').innerHTML = so;

  /* ---------- time axis ---------- */
  var ticks = [[55,7],[162,9],[243,11],[333,1],[450,4],[552,6],[644,8],[745,10],[840,12],[924,3],[1032,5],[1100,10],[1190,12],[1290,2],[1375,4],[1470,6],[1578,8],[1687,10],[1786,12],[1892,2],[1982,4],[2082,6],[2187,8],[2293,10],[2393,12],[2497,2],[2584,4]];
  var ax = '';
  ticks.forEach(function (t, idx) {
    ax += '<line class="tick" x1="' + t[0] + '" x2="' + t[0] + '" y1="1861" y2="1898"/>';
    ax += text('tlabel', t[0] + 3, 1891, t[1]);
    var next = idx < ticks.length - 1 ? ticks[idx + 1][0] : 2680, w = (next - t[0]) / 4;
    for (var m = 1; m < 4; m++) ax += '<line class="tick" x1="' + (t[0] + w * m - 8) + '" x2="' + (t[0] + w * m - 8) + '" y1="1861" y2="1868"/>';
  });
  ax += rect(2682, 1861, 196, 37, '#400080');
  ax += text('datetext', 2780, 1890, '2019/09/19/四', 'middle');
  document.getElementById('axis').innerHTML = ax;

  /* ---------- cost distribution ---------- */
  function chip(pts, col) {
    return '<polygon fill="' + col + '" points="' + pts.map(function (q) { return ((q[0] - 97) / 2.613).toFixed(1) + ',' + ((q[1]) / 2.16 + 8).toFixed(1); }).join(' ') + '"/>';
  }
  var c = '';
  c += '<rect x="0" y="0" width="3" height="338" fill="#f0f0f0"/>';
  c += chip([[97,120],[130,130],[190,155],[270,160],[380,170],[530,185],[620,178],[780,185],[855,195],[620,205],[540,215],[720,225],[920,240],[1060,265],[1280,265],[1550,273],[1060,280],[830,295],[720,308],[620,320],[990,320],[1295,322],[1130,340],[950,375],[880,390],[1080,393],[640,405],[480,425],[400,440],[660,478],[540,487],[290,495],[180,500],[300,535],[210,575],[255,595],[155,610],[240,640],[190,665],[155,690],[97,735]], '#ffffff');
  c += chip([[97,165],[250,205],[320,205],[255,235],[395,250],[490,285],[460,315],[210,355],[130,375],[100,425],[200,465],[280,490],[160,495],[120,520],[210,545],[205,575],[250,595],[155,610],[240,640],[190,665],[155,690],[97,733]], '#ffc000');
  c += chip([[490,298],[590,320],[745,320],[570,350],[540,360],[615,380],[640,405],[290,410],[265,440],[320,455],[400,470],[290,485],[200,465],[105,425],[130,375],[210,355],[380,325],[460,315]], '#b87800');
  c += chip([[120,515],[160,495],[220,490],[180,510],[190,530],[300,540],[270,553],[210,545]], '#b87800');
  c += chip([[540,358],[610,340],[990,325],[870,370],[840,385],[890,395],[700,390],[640,390],[615,380]], '#ff6400');
  c += chip([[290,410],[480,405],[480,425],[300,425]], '#ff6400');
  c += chip([[100,125],[190,155],[260,165],[390,180],[470,195],[720,197],[470,205],[400,222],[280,190],[170,175],[110,160]], '#ff0000');
  c += chip([[250,232],[320,210],[380,210],[540,235],[840,265],[975,268],[830,290],[720,290],[500,280],[400,265],[395,250]], '#ff8080');
  c += chip([[505,285],[710,295],[700,310],[600,305]], '#ff0080');
  c += chip([[1000,335],[1130,325],[1130,338],[1040,345]], '#ff0080');
  c += chip([[265,440],[355,430],[385,455],[320,452]], '#ff0080');
  c += chip([[875,356],[895,356],[895,364],[875,364]], '#ff0080');
  c += chip([[850,378],[870,378],[870,386],[850,386]], '#ff0080');
  c += chip([[555,471],[590,471],[590,478],[555,478]], '#ff0080');
  document.getElementById('chips').innerHTML = c;
})();
```
